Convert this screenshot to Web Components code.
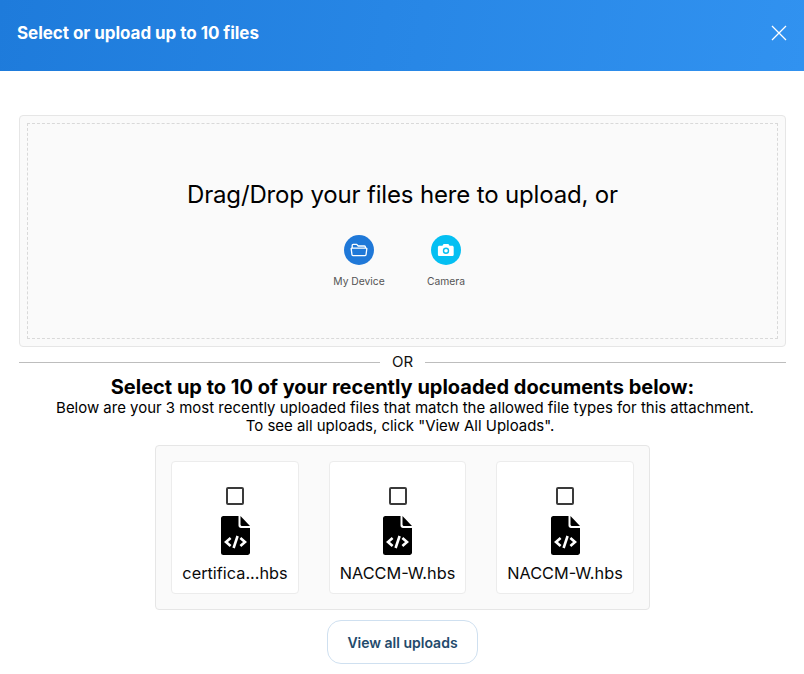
<!DOCTYPE html>
<html lang="en">
<head>
<meta charset="utf-8">
<title>Select files</title>
<style>
  html, body { margin: 0; background: #fff; }
  body { font-family: Inter, "Liberation Sans", sans-serif; color: #000; }
</style>
</head>
<body>
<upload-modal title-text="Select or upload up to 10 files">
  <drop-zone>
    <source-button label="My Device" color="#1f78d8" icon="folder"></source-button>
    <source-button label="Camera" color="#04bff2" icon="camera"></source-button>
  </drop-zone>
  <or-divider></or-divider>
  <recent-files>
    <file-card name="certifica...hbs" width="128"></file-card>
    <file-card name="NACCM-W.hbs" width="137"></file-card>
    <file-card name="NACCM-W.hbs" width="138"></file-card>
  </recent-files>
</upload-modal>

<script>
// Modal shell: gradient header with title and close button, body slot below
class UploadModal extends HTMLElement {
  connectedCallback() {
    this.attachShadow({ mode: 'open' }).innerHTML = `
      <style>
        :host { display: block; }
        header {
          height: 71px;
          box-sizing: border-box;
          padding: 0 17px 5px 17px;
          display: flex;
          align-items: center;
          justify-content: space-between;
          background: linear-gradient(100deg, #1e7bdb 0%, #3192f0 100%);
          color: #fff;
          font-size: 17px;
          letter-spacing: -0.04px;
          font-weight: 700;
        }
        svg { display: block; }
        main { padding: 44px 18px 0 19px; display: block; }
      </style>
      <header>
        <span>${this.getAttribute('title-text')}</span>
        <svg width="16" height="16" viewBox="0 0 16 16" fill="none" stroke="#fff" stroke-width="1.3">
          <path d="M1 1 15 15M15 1 1 15"/>
        </svg>
      </header>
      <main><slot></slot></main>`;
  }
}

class DropZone extends HTMLElement {
  connectedCallback() {
    this.attachShadow({ mode: 'open' }).innerHTML = `
      <style>
        :host {
          display: block;
          background: #fafafa;
          border: 1px solid #e6e6e6;
          border-radius: 4px;
          padding: 7px;
        }
        .inner {
          height: 214px;
          border: 1px dashed #d9d9d9;
          display: flex;
          flex-direction: column;
          align-items: center;
        }
        h2 {
          margin: 54px 0 0;
          font-size: 24px;
          letter-spacing: -0.16px;
          line-height: 34px;
          font-weight: 400;
          color: #000;
        }
        .sources { display: flex; margin-top: 23px; gap: 0; }
      </style>
      <div class="inner">
        <h2>Drag/Drop your files here to upload, or</h2>
        <div class="sources"><slot></slot></div>
      </div>`;
  }
}

const SOURCE_ICONS = {
  folder: `<svg width="18" height="18" viewBox="0 0 18 18" fill="none" stroke="#fff" stroke-width="1.3" stroke-linejoin="round">
      <path d="M2.2 7V4.3c0-.5.4-.9.9-.9h3.6l1.500 1.600h6.300c.5 0 .9.4.9.9V7"/>
      <path d="M1.600 7.200h14.800c.3 0 .5.3.4.6l-.8 6c0 .5-.5.8-.9.8H2.900c-.4 0-.9-.3-.9-.8l-.8-6c-.1-.3.1-.6.4-.6z"/>
    </svg>`,
  camera: `<svg width="18" height="18" viewBox="0 0 18 18">
      <path fill="#fff" fill-rule="evenodd" d="M6.600 3h4.800l1.200 1.700h2.500c.9 0 1.600.7 1.600 1.600v7.100c0 .9-.7 1.600-1.600 1.600H2.500c-.9 0-1.600-.7-1.600-1.600V6.300c0-.9.7-1.600 1.600-1.600h2.900zM9 6.500a3.200 3.200 0 1 0 0 6.400 3.200 3.200 0 0 0 0-6.400zm0 1.400a1.800 1.800 0 1 1 0 3.600 1.800 1.800 0 0 1 0-3.600z"/>
    </svg>`
};

class SourceButton extends HTMLElement {
  connectedCallback() {
    const icon = SOURCE_ICONS[this.getAttribute('icon')];
    this.attachShadow({ mode: 'open' }).innerHTML = `
      <style>
        :host {
          display: flex;
          flex-direction: column;
          align-items: center;
          width: 87px;
        }
        .dot {
          width: 30px;
          height: 30px;
          border-radius: 50%;
          background: ${this.getAttribute('color')};
          display: flex;
          align-items: center;
          justify-content: center;
        }
        span { margin-top: 9px; font-size: 10.300px; line-height: 14px; color: #555; }
      </style>
      <div class="dot">${icon}</div>
      <span>${this.getAttribute('label')}</span>`;
  }
}

class OrDivider extends HTMLElement {
  connectedCallback() {
    this.attachShadow({ mode: 'open' }).innerHTML = `
      <style>
        :host {
          display: flex;
          align-items: center;
          gap: 12px;
          margin-top: 6px;
          font-size: 15px;
          line-height: 18px;
          color: #111;
        }
        i { flex: 1; height: 1px; background: #bdbdbd; }
      </style>
      <i></i><span>OR</span><i></i>`;
  }
}

class RecentFiles extends HTMLElement {
  connectedCallback() {
    this.attachShadow({ mode: 'open' }).innerHTML = `
      <style>
        :host { display: flex; flex-direction: column; align-items: center; }
        h3 { margin: 4px 0 0; font-size: 20px; line-height: 24px; font-weight: 700; color: #000; }
        .note { font-size: 14.960px; line-height: 18px; text-align: center; color: #000; }
        .note.first { padding-left: 5px; }
        .note.second { padding-right: 5px; }
        .list {
          margin-top: 10px;
          display: flex;
          gap: 30px;
          padding: 15px;
          background: #fafafa;
          border: 1px solid #e6e6e6;
          border-radius: 4px;
        }
        button {
          margin-top: 10px;
          width: 151px;
          height: 44px;
          background: #fff;
          border: 1px solid #cfe0f0;
          border-radius: 14px;
          font: 600 14px Inter, "Liberation Sans", sans-serif;
          color: #234a6b;
        }
      </style>
      <h3>Select up to 10 of your recently uploaded documents below:</h3>
      <div class="note first">Below are your 3 most recently uploaded files that match the allowed file types for this attachment.</div>
      <div class="note second">To see all uploads, click "View All Uploads".</div>
      <div class="list"><slot></slot></div>
      <button>View all uploads</button>`;
  }
}

class FileCard extends HTMLElement {
  connectedCallback() {
    this.attachShadow({ mode: 'open' }).innerHTML = `
      <style>
        :host {
          display: flex;
          flex-direction: column;
          align-items: center;
          box-sizing: border-box;
          width: ${this.getAttribute('width')}px;
          height: 133px;
          background: #fff;
          border: 1px solid #ececec;
          border-radius: 4px;
        }
        .check {
          margin-top: 25px;
          box-sizing: border-box;
          width: 18px;
          height: 18px;
          border: 2px solid #3a3a3a;
          border-radius: 2px;
        }
        svg { display: block; margin-top: 11px; }
        span { margin-top: 7px; font-size: 16.300px; line-height: 22px; color: #0a0a0a; }
      </style>
      <div class="check"></div>
      <svg width="29" height="39" viewBox="0 0 29 39">
        <path fill="#000" d="M2.500 0H17.500v9.500c0 1.400 1.100 2.500 2.500 2.500h9v24.500c0 1.400-1.100 2.500-2.500 2.500h-24A2.500 2.500 0 0 1 0 36.500v-34A2.500 2.500 0 0 1 2.500 0z"/>
        <path fill="#000" d="M19.500 0 29 10h-8c-.8 0-1.500-.7-1.500-1.500z"/>
        <path fill="none" stroke="#fff" stroke-width="2.600" d="M9.600 22 5 26l4.600 4M19.400 22l4.600 4-4.600 4M16.600 20l-4 12"/>
      </svg>
      <span>${this.getAttribute('name')}</span>`;
  }
}

customElements.define('upload-modal', UploadModal);
customElements.define('drop-zone', DropZone);
customElements.define('source-button', SourceButton);
customElements.define('or-divider', OrDivider);
customElements.define('recent-files', RecentFiles);
customElements.define('file-card', FileCard);
</script>
</body>
</html>
